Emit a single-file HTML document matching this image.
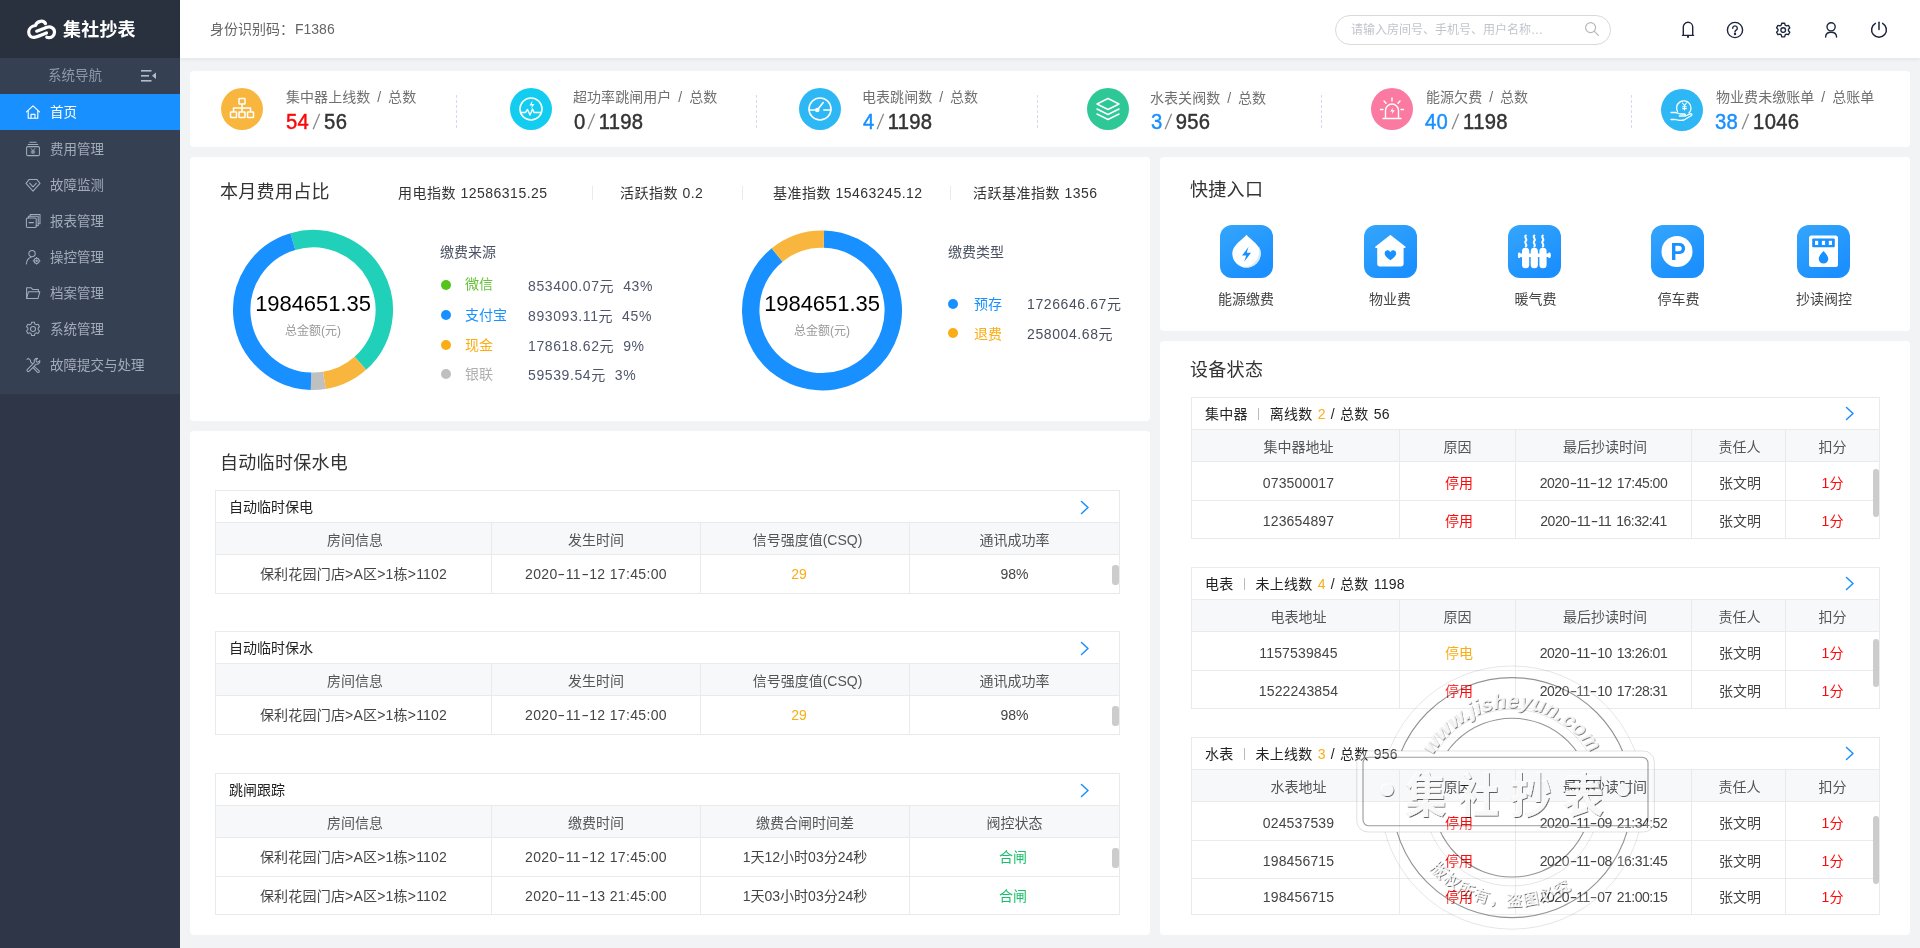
<!DOCTYPE html>
<html lang="zh-CN"><head><meta charset="utf-8"><title>集社抄表</title>
<style>
*{box-sizing:border-box;margin:0;padding:0}
html,body{width:1920px;height:948px;overflow:hidden}
body{position:relative;background:#f2f3f5;font-family:"Liberation Sans","Noto Sans CJK SC",sans-serif;font-size:14px;color:#333}
.abs{position:absolute}
.t{position:absolute;white-space:nowrap;line-height:1}
svg{display:block;overflow:visible}
/* sidebar */
#side{position:absolute;left:0;top:0;width:180px;height:948px;background:#2e3647}
#side .logo{position:absolute;left:0;top:0;width:180px;height:58px;background:#29313f}
#side .menu{position:absolute;left:0;top:58px;width:180px;height:336px;background:#354053}
#side .nav{position:absolute;left:0;top:0;width:180px;height:36px}
#side .item{position:absolute;left:0;width:180px;height:36px;color:#a3abb9;font-size:13.5px}
#side .item.on{background:#1890ff;color:#fff}
#side .item span{position:absolute;left:50px;top:0;line-height:37px}
#side .item svg{position:absolute;left:25px;top:10px}
/* topbar */
#top{position:absolute;left:180px;top:0;width:1740px;height:58px;background:#fff;box-shadow:0 1px 4px rgba(0,21,41,.08)}
.card{position:absolute;background:#fff;border-radius:4px}
/* tables */
.box{position:absolute;border:1px solid #e8eaec;background:#fff;overflow:hidden}
.box .hd{position:absolute;left:0;top:0;right:0;height:32px;border-bottom:1px solid #e8eaec;line-height:33px;padding-left:13px;font-size:14px;color:#222}
.box .hd .or{color:#faad14}
.box .hd .sep{display:inline-block;width:1px;height:12px;background:#bbb;margin:0 11px 0 10px;vertical-align:-1px}
.box .arr{position:absolute;top:9px}
.row{position:absolute;left:0;right:0;display:flex}
.row>div{border-right:1px solid #e8eaec;text-align:center;white-space:nowrap;overflow:hidden}
.row>div:last-child{border-right:0}
.row.th{background:#f7f8fa;color:#555;height:32px;line-height:34.5px;border-bottom:1px solid #e8eaec}
.row.td{color:#444;border-bottom:1px solid #e8eaec}
.num{letter-spacing:.35px}
.rm{letter-spacing:.2px}
.red{color:#fb0a0a}.org{color:#faad14}.grn{color:#19be6b}.blu{color:#1890ff}
.thumb{position:absolute;width:6px;border-radius:3px;background:#ccc}
.ic{width:42px;height:42px;border-radius:50%}
.sl{font-size:14px;color:#707070;letter-spacing:.05px;word-spacing:3px}
.sn{font-size:22px;color:#333;letter-spacing:.35px;transform:scaleX(.92);transform-origin:0 50%;-webkit-text-stroke:.45px currentColor}
.sn i{font-style:normal;font-weight:normal;color:#888;-webkit-text-stroke:0;font-size:21px;margin:0 5px 0 5px;display:inline-block;transform:skewX(-12deg) scaleX(.9)}
.dv{top:95px;width:0;height:33px;border-left:1px dashed #d6d9ef}
.ttl{font-size:18px;color:#333;letter-spacing:.3px}
.ix{font-size:14px;color:#333;letter-spacing:.5px}
.vs{width:1px;height:14px;background:#ebebeb}
.big{font-size:22px;color:#000;text-align:center;letter-spacing:-.05px}
.sm{font-size:12px;color:#999;text-align:center}
.lg{font-size:14px;color:#4a5162}
.lb{font-size:14px}
.lv{font-size:14px;color:#50566a;letter-spacing:.6px}
.dot{width:10px;height:10px;border-radius:50%}
.c4>div:nth-child(1){width:276px}.c4>div:nth-child(2){width:209px}.c4>div:nth-child(3){width:209px}.c4>div:nth-child(4){flex:1}
.c5>div:nth-child(1){width:208px}.c5>div:nth-child(2){width:116px}.c5>div:nth-child(3){width:176px}.c5>div:nth-child(4){width:94px}.c5>div:nth-child(5){flex:1}
.ql{font-size:14px;color:#444;text-align:center}
.num2{letter-spacing:-.5px;word-spacing:1.5px;padding-left:0}
.num3{letter-spacing:.15px;padding-left:6px}
#app{position:absolute;left:0;top:0;width:1920px;height:948px;will-change:transform}
.hy{display:inline-block;transform:scaleX(1.6);margin:0 1.6px}
.sn i.n{margin-left:3px}

</style></head><body><div id="app">
<div id="side">
  <div class="logo">
    <svg class="abs" style="left:24px;top:14px" width="36" height="30" viewBox="0 0 36 30" fill="none" stroke="#fff" stroke-width="3.2" stroke-linecap="round" stroke-linejoin="round">
      <path d="M21.5 9.6C20.5 7.8 18.5 7 16.5 7.3 13.5 7.7 12 9.5 11.5 11.5 8 12 4.7 14.5 4.7 18c0 3.5 2.3 5.6 5.3 5.4 2-.1 3-.6 12.5-4.4"/>
      <path d="M12.7 17.2L23 13.3c4-1.3 7.5 1.2 7.5 4.7 0 3.5-2.5 5.8-5.5 5.6-1-.1-1.6-.2-2.2-.4"/>
    </svg>
    <div class="t" style="left:63px;top:21px;font-size:18px;font-weight:700;color:#fff;letter-spacing:.2px">集社抄表</div>
  </div>
  <div class="menu">
    <div class="nav">
      <div class="t" style="left:48px;top:11px;font-size:13.5px;color:#8f98a8">系统导航</div>
      <svg class="abs" style="left:141px;top:12px" width="16" height="12" viewBox="0 0 16 12" fill="#b5bcc9"><rect x="0" y="0" width="10.5" height="1.6"/><rect x="0" y="5" width="8" height="1.6"/><rect x="0" y="10" width="10.5" height="1.6"/><path d="M15 2.6v6.4L11 5.8z"/></svg>
    </div>
    <div class="item on" style="top:36px"><svg width="16" height="16" viewBox="0 0 16 16" fill="none" stroke="#fff" stroke-width="1.15" stroke-linejoin="round" stroke-linecap="round"><path d="M1.5 7.8L8 1.8l6.5 6"/><path d="M3.2 7v7.2h9.6V7"/><path d="M6 14v-3.6h4V14"/></svg><span>首页</span></div>
    <div class="item" style="top:73px"><svg width="16" height="16" viewBox="0 0 16 16" fill="none" stroke="#a3abb9" stroke-width="1.05" stroke-linejoin="round" stroke-linecap="round"><rect x="1.6" y="5.6" width="12.8" height="9" rx="1.2"/><path d="M3.2 3.4h9.6M4.8 1.3h6.4"/><path d="M6.2 7.6L8 9.8l1.8-2.2M8 9.8v3M6.2 10.2h3.6M6.2 11.8h3.6" stroke-width=".9"/></svg><span>费用管理</span></div>
    <div class="item" style="top:109px"><svg width="16" height="16" viewBox="0 0 16 16" fill="none" stroke="#a3abb9" stroke-width="1.05" stroke-linejoin="round" stroke-linecap="round"><path d="M4.2 2.4h7.6L15 6.4 8 14.2 1 6.4z"/><path d="M4.6 6.2L8 9.8l3.4-3.6"/></svg><span>故障监测</span></div>
    <div class="item" style="top:145px"><svg width="16" height="16" viewBox="0 0 16 16" fill="none" stroke="#a3abb9" stroke-width="1.05" stroke-linejoin="round" stroke-linecap="round"><rect x="1.4" y="5" width="9.8" height="9.4" rx="1"/><path d="M3.4 5V3.2h9.8v9.4h-2"/><path d="M5.2 3.2V1.4H15v9.4h-1.8"/><path d="M4 9.6h4.4"/></svg><span>报表管理</span></div>
    <div class="item" style="top:181px"><svg width="16" height="16" viewBox="0 0 16 16" fill="none" stroke="#a3abb9" stroke-width="1.05" stroke-linejoin="round" stroke-linecap="round"><circle cx="7" cy="4.6" r="3.2"/><path d="M1.4 15c.2-3.6 2-6 4.6-6.8"/><circle cx="11.6" cy="11.8" r="2.6"/><circle cx="11.6" cy="11.8" r=".7"/><path d="M11.6 8.4v.8M11.6 14.4v.8M8.2 11.8h.8M14.2 11.8h.8" stroke-width="1"/></svg><span>操控管理</span></div>
    <div class="item" style="top:217px"><svg width="16" height="16" viewBox="0 0 16 16" fill="none" stroke="#a3abb9" stroke-width="1.05" stroke-linejoin="round" stroke-linecap="round"><path d="M1.6 13.4V2.8h4.6L7.6 4.4h5.8v2.4"/><path d="M1.6 13.4L3.4 6.8h11.4L13 13.4z"/></svg><span>档案管理</span></div>
    <div class="item" style="top:253px"><svg width="16" height="16" viewBox="0 0 16 16" fill="none" stroke="#a3abb9" stroke-width="1.05" stroke-linejoin="round" stroke-linecap="round"><path d="M6.6 1.2h2.8l.5 1.9 1.3.75 1.9-.55 1.4 2.4-1.4 1.4v1.5l1.4 1.4-1.4 2.4-1.9-.55-1.3.75-.5 1.9H6.6l-.5-1.9-1.3-.75-1.9.55-1.4-2.4 1.4-1.4V7.1L1.5 5.7l1.4-2.4 1.9.55 1.3-.75z"/><circle cx="8" cy="7.9" r="2.5"/></svg><span>系统管理</span></div>
    <div class="item" style="top:289px"><svg width="16" height="16" viewBox="0 0 16 16" fill="none" stroke="#a3abb9" stroke-width="1.05" stroke-linejoin="round" stroke-linecap="round"><path d="M10 2.2a3 3 0 0 0-.6 3.2L2.2 12.6a1.3 1.3 0 0 0 1.8 1.8L11.2 7.2a3 3 0 0 0 3.6-3.6l-1.8 1.6-1.6-.4-.4-1.6 1.6-1.8a3 3 0 0 0-2.6.8z"/><path d="M2 2.4l1.2-1 2.2 1.8.2 1.6L7.4 6.6M9.4 9.6l4.8 4.2a1.2 1.2 0 0 1-1.6 1.6L8.2 10.8"/></svg><span>故障提交与处理</span></div>
  </div>
</div>

<div id="top">
  <div class="t" style="left:30px;top:22px;font-size:14px;color:#666">身份识别码：<span style="margin-left:1px">F1386</span></div>
  <div class="abs" style="left:1155px;top:15px;width:276px;height:30px;border:1px solid #d9d9d9;border-radius:16px;background:#fff"></div>
  <div class="t" style="left:1171px;top:24px;font-size:12px;color:#c0c4cc">请输入房间号、手机号、用户名称…</div>
  <svg class="abs" style="left:1404px;top:21px" width="16" height="16" viewBox="0 0 16 16" fill="none" stroke="#b8b8b8" stroke-width="1.2" stroke-linecap="round"><circle cx="6.6" cy="6.6" r="5"/><path d="M10.4 10.4l4 4"/></svg>
  <!-- bell -->
  <svg class="abs" style="left:1499px;top:20px" width="18" height="20" viewBox="0 0 18 20" fill="none" stroke="#1b2540" stroke-width="1.4" stroke-linecap="round" stroke-linejoin="round"><path d="M4.3 15.2V7a4.7 4.7 0 0 1 9.4 0v8.2"/><path d="M3.5 15.4h11"/><path d="M9 16.4v.7" stroke-width="2"/></svg>
  <!-- question -->
  <svg class="abs" style="left:1546px;top:21px" width="18" height="18" viewBox="0 0 18 18" fill="none" stroke="#1b2540" stroke-width="1.4" stroke-linecap="round" stroke-linejoin="round"><circle cx="9" cy="9" r="7.6"/><path d="M6.7 7.2a2.3 2.3 0 1 1 3.5 2c-.8.5-1.2.9-1.2 1.8"/><circle cx="9" cy="13" r=".5" fill="#1b2540"/></svg>
  <!-- gear -->
  <svg class="abs" style="left:1594.7px;top:22.1px" width="16.4" height="16.4" viewBox="0 0 16 16" fill="none" stroke="#1b2540" stroke-width="1.3" stroke-linecap="round" stroke-linejoin="round"><path d="M6.6 1.2h2.8l.5 1.9 1.3.75 1.9-.55 1.4 2.4-1.4 1.4v1.5l1.4 1.4-1.4 2.4-1.9-.55-1.3.75-.5 1.9H6.6l-.5-1.9-1.3-.75-1.9.55-1.4-2.4 1.4-1.4V7.1L1.5 5.7l1.4-2.4 1.9.55 1.3-.75z"/><circle cx="8" cy="7.9" r="2.3"/></svg>
  <!-- user -->
  <svg class="abs" style="left:1642px;top:21px" width="18" height="18" viewBox="0 0 18 18" fill="none" stroke="#1b2540" stroke-width="1.4" stroke-linecap="round" stroke-linejoin="round"><circle cx="9.1" cy="5.8" r="4.1"/><path d="M3.6 16C3.8 12.8 6 11.2 9.1 11.2S14.4 12.8 14.6 16"/></svg>
  <!-- power -->
  <svg class="abs" style="left:1690px;top:20px" width="18" height="19" viewBox="0 0 18 19" fill="none" stroke="#1b2540" stroke-width="1.5" stroke-linecap="round" stroke-linejoin="round"><path d="M5.4 3.4a7.4 7.4 0 1 0 7.2 0"/><path d="M9 2.2v7.4"/></svg>
</div>

<div class="card" id="stats" style="left:190px;top:71px;width:1720px;height:76px"></div>
<!-- stat 1 -->
<div class="abs ic" style="left:221px;top:88px;background:#f9b63f"><svg width="42" height="42" viewBox="0 0 42 42" fill="none" stroke="#fff" stroke-width="1.5" stroke-linejoin="round"><rect x="18" y="10.5" width="6" height="5.5" rx=".6"/><rect x="9.5" y="24" width="6" height="5.5" rx=".6"/><rect x="18" y="24" width="6" height="5.5" rx=".6"/><rect x="26.5" y="24" width="6" height="5.5" rx=".6"/><path d="M21 16v8M12.5 24v-4h17v4"/></svg></div>
<div class="t sl" style="left:286px;top:90px">集中器上线数 / 总数</div>
<div class="t sn" style="left:286px;top:111px"><span style="color:#fa0808">54</span><i>/</i>56</div>
<div class="abs dv" style="left:456px"></div>
<!-- stat 2 -->
<div class="abs ic" style="left:510px;top:88px;background:#13cdf0"><svg width="42" height="42" viewBox="0 0 42 42" fill="none" stroke="#fff" stroke-width="1.6" stroke-linejoin="round" stroke-linecap="round"><circle cx="21" cy="21" r="11"/><path d="M10.5 24.5h5l2-3 2.5 5.5 2.5-6 1.5 3.5h7" stroke-width="1.4"/><path d="M22.5 12.5l-3 5h2.6l-1.2 3.5 3.6-5h-2.6z" fill="#fff" stroke="none"/></svg></div>
<div class="t sl" style="left:573px;top:90px">超功率跳闸用户 / 总数</div>
<div class="t sn" style="left:574px;top:111px"><span>0</span><i class="n">/</i>1198</div>
<div class="abs dv" style="left:756px"></div>
<!-- stat 3 -->
<div class="abs ic" style="left:799px;top:88px;background:#2db7f5"><svg width="42" height="42" viewBox="0 0 42 42" fill="none" stroke="#fff" stroke-width="1.6" stroke-linejoin="round" stroke-linecap="round"><circle cx="21" cy="21" r="11"/><circle cx="18.3" cy="22" r="1.5" fill="#fff"/><path d="M10.2 22h6.4M19.3 20.8l4.9-6.2M24.8 22h7"/></svg></div>
<div class="t sl" style="left:862px;top:90px">电表跳闸数 / 总数</div>
<div class="t sn" style="left:863px;top:111px"><span class="blu">4</span><i class="n">/</i>1198</div>
<div class="abs dv" style="left:1037px"></div>
<!-- stat 4 -->
<div class="abs ic" style="left:1087px;top:88px;background:#2dc895"><svg width="42" height="42" viewBox="0 0 42 42" fill="none" stroke="#fff" stroke-width="1.5" stroke-linejoin="round" stroke-linecap="round"><path d="M21 10.5l11 5.5-11 5.5-11-5.5z"/><path d="M10 21l11 5.5 11-5.5"/><path d="M10 26l11 5.5 11-5.5"/></svg></div>
<div class="t sl" style="left:1150px;top:91px">水表关阀数 / 总数</div>
<div class="t sn" style="left:1151px;top:111px"><span class="blu">3</span><i class="n">/</i>956</div>
<div class="abs dv" style="left:1321px"></div>
<!-- stat 5 -->
<div class="abs ic" style="left:1371px;top:88px;background:#fa7aa2"><svg width="42" height="42" viewBox="0 0 42 42" fill="none" stroke="#fff" stroke-width="1.4" stroke-linejoin="round" stroke-linecap="round"><path d="M14.5 30v-7.5a6.5 6.5 0 0 1 13 0V30"/><path d="M12 30.5h18"/><path d="M21 10v3M13 13l2 2.2M29 13l-2 2.2M9.5 21.5h2.5M30 21.5h2.5"/><path d="M22 19.5l-2.8 4h2.4l-1 3 3.2-4.2h-2.4z" fill="#fff" stroke="none"/></svg></div>
<div class="t sl" style="left:1426px;top:90px">能源欠费 / 总数</div>
<div class="t sn" style="left:1425px;top:111px"><span class="blu">40</span><i>/</i>1198</div>
<div class="abs dv" style="left:1631px"></div>
<!-- stat 6 -->
<div class="abs ic" style="left:1661px;top:89px;background:#2db7f5"><svg width="42" height="42" viewBox="0 0 42 42" fill="none" stroke="#fff" stroke-width="1.3" stroke-linejoin="round" stroke-linecap="round"><path d="M16.5 22.5a7.2 7.2 0 1 1 11.5 1.5"/><path d="M21.5 14l2 2.6 2-2.6M23.5 16.6v4.4M21.6 17.8h3.8M21.6 19.6h3.8" stroke-width="1.1"/><path d="M10 23.5h4.5c2 0 3 1.5 5 1.5h4c1.2 0 1.2 2-.2 2h-5"/><path d="M10 30.5h4.5c3 1 6 1 8.5.5l7.5-4.5c1-.8 0-2.2-1.2-1.6l-4.8 2.1"/></svg></div>
<div class="t sl" style="left:1716px;top:90px">物业费未缴账单 / 总账单</div>
<div class="t sn" style="left:1715px;top:111px"><span class="blu">38</span><i>/</i>1046</div>

<div class="card" style="left:190px;top:157px;width:960px;height:264px"></div>
<div class="t ttl" style="left:220px;top:183px">本月费用占比</div>
<div class="t ix" style="left:398px;top:186px">用电指数 12586315.25</div>
<div class="abs vs" style="left:592px;top:186px"></div>
<div class="t ix" style="left:620px;top:186px">活跃指数 0.2</div>
<div class="abs vs" style="left:742px;top:186px"></div>
<div class="t ix" style="left:773px;top:186px">基准指数 15463245.12</div>
<div class="abs vs" style="left:950px;top:186px"></div>
<div class="t ix" style="left:973px;top:186px">活跃基准指数 1356</div>
<svg class="abs" style="left:0;top:0" width="1160" height="430"><path d="M292.87 241.60A71.3 71.3 0 0 1 360.34 363.32" fill="none" stroke="#20d0b8" stroke-width="17.4"/><path d="M360.34 363.32A71.3 71.3 0 0 1 324.40 380.38" fill="none" stroke="#f9b63f" stroke-width="17.4"/><path d="M324.40 380.38A71.3 71.3 0 0 1 311.01 381.27" fill="none" stroke="#c0c0c0" stroke-width="17.4"/><path d="M311.01 381.27A71.3 71.3 0 0 1 292.87 241.60" fill="none" stroke="#1890ff" stroke-width="17.4"/><path d="M823.87 239.12A71.3 71.3 0 1 1 777.13 254.99" fill="none" stroke="#1890ff" stroke-width="17.4"/><path d="M777.13 254.99A71.3 71.3 0 0 1 823.87 239.12" fill="none" stroke="#f9b63f" stroke-width="17.4"/></svg>
<div class="t big" style="left:233px;width:160px;top:293px">1984651.35</div>
<div class="t sm" style="left:233px;width:160px;top:325px">总金额(元)</div>
<div class="t big" style="left:742px;width:160px;top:293px">1984651.35</div>
<div class="t sm" style="left:742px;width:160px;top:325px">总金额(元)</div>

<div class="t lg" style="left:440px;top:245px">缴费来源</div>
<div class="abs dot" style="left:441px;top:280px;background:#52c41a"></div><div class="t lb" style="left:465px;top:277px;color:#67c23a">微信</div><div class="t lv" style="left:528px;top:279px">853400.07元&nbsp; 43%</div>
<div class="abs dot" style="left:441px;top:310px;background:#1890ff"></div><div class="t lb" style="left:465px;top:308px;color:#1890ff">支付宝</div><div class="t lv" style="left:528px;top:309px">893093.11元&nbsp; 45%</div>
<div class="abs dot" style="left:441px;top:340px;background:#faad14"></div><div class="t lb" style="left:465px;top:338px;color:#faad14">现金</div><div class="t lv" style="left:528px;top:339px">178618.62元&nbsp; 9%</div>
<div class="abs dot" style="left:441px;top:369px;background:#bfbfbf"></div><div class="t lb" style="left:465px;top:367px;color:#b0b0b0">银联</div><div class="t lv" style="left:528px;top:368px">59539.54元&nbsp; 3%</div>

<div class="t lg" style="left:948px;top:245px">缴费类型</div>
<div class="abs dot" style="left:948px;top:299px;background:#1890ff"></div><div class="t lb" style="left:974px;top:297px;color:#1890ff">预存</div><div class="t lv" style="left:1027px;top:297px;color:#484e5c">1726646.67元</div>
<div class="abs dot" style="left:948px;top:328px;background:#faad14"></div><div class="t lb" style="left:974px;top:327px;color:#faad14">退费</div><div class="t lv" style="left:1027px;top:327px;color:#484e5c">258004.68元</div>

<div class="card" style="left:190px;top:431px;width:960px;height:504px"></div>
<div class="t ttl" style="left:220px;top:454px">自动临时保水电</div>

<div class="box" style="left:215px;top:490px;width:905px;height:104px">
  <div class="hd">自动临时保电</div>
  <svg class="arr" style="left:864px" width="10" height="15" viewBox="0 0 10 15" fill="none" stroke="#1890ff" stroke-width="1.5" stroke-linecap="round" stroke-linejoin="round"><path d="M1.5 1.5L8 7.5 1.5 13.5"/></svg>
  <div class="row th c4" style="top:32px"><div style="padding-left:3px">房间信息</div><div>发生时间</div><div style="padding-left:5px">信号强度值(CSQ)</div><div>通讯成功率</div></div>
  <div class="row td c4" style="top:64px;height:39px;line-height:38px"><div class="rm">保利花园门店&gt;A区&gt;1栋&gt;1102</div><div class="num">2020<span class="hy">-</span>11<span class="hy">-</span>12 17:45:00</div><div class="org" style="padding-right:12px">29</div><div>98%</div></div>
  <div class="thumb" style="left:896px;top:74px;height:20px;width:7px"></div>
</div>

<div class="box" style="left:215px;top:631px;width:905px;height:104px">
  <div class="hd">自动临时保水</div>
  <svg class="arr" style="left:864px" width="10" height="15" viewBox="0 0 10 15" fill="none" stroke="#1890ff" stroke-width="1.5" stroke-linecap="round" stroke-linejoin="round"><path d="M1.5 1.5L8 7.5 1.5 13.5"/></svg>
  <div class="row th c4" style="top:32px"><div style="padding-left:3px">房间信息</div><div>发生时间</div><div style="padding-left:5px">信号强度值(CSQ)</div><div>通讯成功率</div></div>
  <div class="row td c4" style="top:64px;height:39px;line-height:38px"><div class="rm">保利花园门店&gt;A区&gt;1栋&gt;1102</div><div class="num">2020<span class="hy">-</span>11<span class="hy">-</span>12 17:45:00</div><div class="org" style="padding-right:12px">29</div><div>98%</div></div>
  <div class="thumb" style="left:896px;top:74px;height:20px;width:7px"></div>
</div>

<div class="box" style="left:215px;top:773px;width:905px;height:142px">
  <div class="hd">跳闸跟踪</div>
  <svg class="arr" style="left:864px" width="10" height="15" viewBox="0 0 10 15" fill="none" stroke="#1890ff" stroke-width="1.5" stroke-linecap="round" stroke-linejoin="round"><path d="M1.5 1.5L8 7.5 1.5 13.5"/></svg>
  <div class="row th c4" style="top:32px"><div style="padding-left:3px">房间信息</div><div>缴费时间</div><div>缴费合闸时间差</div><div>阀控状态</div></div>
  <div class="row td c4" style="top:64px;height:39px;line-height:38px"><div class="rm">保利花园门店&gt;A区&gt;1栋&gt;1102</div><div class="num">2020<span class="hy">-</span>11<span class="hy">-</span>12 17:45:00</div><div>1天12小时03分24秒</div><div class="grn" style="padding-right:3px">合闸</div></div>
  <div class="row td c4" style="top:103px;height:38px;line-height:38px;border-bottom:0"><div class="rm">保利花园门店&gt;A区&gt;1栋&gt;1102</div><div class="num">2020<span class="hy">-</span>11<span class="hy">-</span>13 21:45:00</div><div>1天03小时03分24秒</div><div class="grn" style="padding-right:3px">合闸</div></div>
  <div class="thumb" style="left:896px;top:74px;height:20px;width:7px"></div>
</div>

<div class="card" style="left:1160px;top:157px;width:750px;height:174px"></div>
<div class="t ttl" style="left:1190px;top:181px">快捷入口</div>
<!-- 1 energy -->
<svg class="abs" style="left:1220px;top:225px" width="53" height="54" viewBox="0 0 53 54"><defs><linearGradient id="g1" x1="0" y1="0" x2=".6" y2="1"><stop offset="0" stop-color="#35a6fc"/><stop offset="1" stop-color="#1a8ffe"/></linearGradient></defs><rect width="53" height="53" rx="12" fill="url(#g1)"/><g transform="translate(.5 1)"><path d="M26 8.8C30 13.8 40.2 19.2 40.2 27.4A14.2 14.2 0 0 1 11.8 27.4C11.8 19.2 22 13.8 26 8.8z" fill="#fff"/><path d="M38.6 20.5c1 2 1.6 4.2 1.6 6.9A14.2 14.2 0 0 1 20 40.2c10 3.3 20.5-6 18.6-19.7z" fill="#d6ebff"/><path d="M28 21l-6.5 8.5h4.2l-2 6.2 6.8-9h-4.3z" fill="#1890ff"/></g></svg>
<div class="t ql" style="left:1218px;top:292px">能源缴费</div>
<!-- 2 property -->
<svg class="abs" style="left:1364px;top:225px" width="53" height="54" viewBox="0 0 53 54"><rect width="53" height="53" rx="12" fill="url(#g1)"/><path d="M26.4 10.9L12 22.2h2v16.8a1.8 1.8 0 0 0 1.8 1.8h21.2a1.8 1.8 0 0 0 1.8-1.8V22.2h2z" fill="#fff" stroke="#fff" stroke-width="1.6" stroke-linejoin="round"/><path d="M26.4 35.2c-3.5-2.5-5.8-4.5-5.8-7a3 3 0 0 1 5.8-1 3 3 0 0 1 5.8 1c0 2.5-2.3 4.5-5.8 7z" fill="#1890ff"/></svg>
<div class="t ql" style="left:1341px;top:292px;width:98px">物业费</div>
<!-- 3 heating -->
<svg class="abs" style="left:1508px;top:225px" width="53" height="54" viewBox="0 0 53 54"><rect width="53" height="53" rx="12" fill="url(#g1)"/><g fill="#fff"><rect x="14" y="22.8" width="7.2" height="20.5" rx="3.6"/><rect x="22.7" y="22.8" width="7.2" height="20.5" rx="3.6"/><rect x="31.4" y="22.8" width="7.2" height="20.5" rx="3.6"/><rect x="10" y="28.6" width="32.6" height="3.4" rx="1.7"/><rect x="10" y="27.6" width="2.4" height="5.4" rx="1"/><rect x="40.2" y="27.6" width="2.4" height="5.4" rx="1"/></g><g fill="none" stroke="#fff" stroke-width="2" stroke-linecap="round"><path d="M17.8 10.5c-2.2 1.8 2.2 3.7 0 5.5s2.2 3.7 0 5.5"/><path d="M26.3 10.5c-2.2 1.8 2.2 3.7 0 5.5s2.2 3.7 0 5.5"/><path d="M34.8 10.5c-2.2 1.8 2.2 3.7 0 5.5s2.2 3.7 0 5.5"/></g></svg>
<div class="t ql" style="left:1486.5px;top:292px;width:98px">暖气费</div>
<!-- 4 parking -->
<svg class="abs" style="left:1651px;top:225px" width="53" height="54" viewBox="0 0 53 54"><rect width="53" height="53" rx="12" fill="url(#g1)"/><circle cx="26" cy="26.5" r="15.5" fill="#fff"/><text x="27.2" y="35.2" text-anchor="middle" font-family="Liberation Sans, sans-serif" font-weight="bold" font-size="23" fill="#1890ff">P</text></svg>
<div class="t ql" style="left:1629.5px;top:292px;width:98px">停车费</div>
<!-- 5 meter -->
<svg class="abs" style="left:1797px;top:225px" width="53" height="54" viewBox="0 0 53 54"><rect width="53" height="53" rx="12" fill="url(#g1)"/><rect x="12" y="10.4" width="29" height="31.7" rx="2.5" fill="#fff"/><rect x="15.2" y="13.6" width="22.6" height="8.6" rx="1" fill="#1890ff"/><rect x="18" y="15.8" width="3.2" height="4.2" fill="#fff"/><rect x="24.9" y="15.8" width="3.2" height="4.2" fill="#fff"/><rect x="31.8" y="15.8" width="3.2" height="4.2" fill="#fff"/><path d="M26.5 26c2.5 3 4.8 5.2 4.8 7.8a4.8 4.8 0 0 1-9.6 0c0-2.6 2.3-4.8 4.8-7.8z" fill="#1890ff"/></svg>
<div class="t ql" style="left:1796px;top:292px">抄读阀控</div>

<div class="card" style="left:1160px;top:341px;width:750px;height:594px"></div>
<div class="t ttl" style="left:1190px;top:361px">设备状态</div>

<div class="box" style="left:1191px;top:397px;width:689px;height:142px">
  <div class="hd" style="word-spacing:1px;letter-spacing:.25px">集中器<span class="sep"></span>离线数 <span class="or">2</span> / 总数 56</div>
  <svg class="arr" style="left:653px;top:8px" width="10" height="15" viewBox="0 0 10 15" fill="none" stroke="#1890ff" stroke-width="1.5" stroke-linecap="round" stroke-linejoin="round"><path d="M1.5 1.5L8 7.5 1.5 13.5"/></svg>
  <div class="row th c5" style="top:32px"><div style="padding-left:6px">集中器地址</div><div>原因</div><div style="padding-left:3px">最后抄读时间</div><div style="padding-left:2px">责任人</div><div>扣分</div></div>
  <div class="row td c5" style="top:64px;height:39px;line-height:42px"><div class="num3">073500017</div><div class="red" style="padding-left:3px">停用</div><div class="num2">2020<span class="hy">-</span>11<span class="hy">-</span>12 17:45:00</div><div style="padding-left:3px">张文明</div><div class="red">1分</div></div>
  <div class="row td c5" style="top:103px;height:38px;line-height:40px;border-bottom:0"><div class="num3">123654897</div><div class="red" style="padding-left:3px">停用</div><div class="num2">2020<span class="hy">-</span>11<span class="hy">-</span>11 16:32:41</div><div style="padding-left:3px">张文明</div><div class="red">1分</div></div>
  <div class="thumb" style="left:681px;top:71px;height:48px"></div>
</div>

<div class="box" style="left:1191px;top:567px;width:689px;height:142px">
  <div class="hd" style="word-spacing:1px;letter-spacing:.25px">电表<span class="sep"></span>未上线数 <span class="or">4</span> / 总数 1198</div>
  <svg class="arr" style="left:653px;top:8px" width="10" height="15" viewBox="0 0 10 15" fill="none" stroke="#1890ff" stroke-width="1.5" stroke-linecap="round" stroke-linejoin="round"><path d="M1.5 1.5L8 7.5 1.5 13.5"/></svg>
  <div class="row th c5" style="top:32px"><div style="padding-left:6px">电表地址</div><div>原因</div><div style="padding-left:3px">最后抄读时间</div><div style="padding-left:2px">责任人</div><div>扣分</div></div>
  <div class="row td c5" style="top:64px;height:39px;line-height:42px"><div class="num3">1157539845</div><div class="org" style="padding-left:3px">停电</div><div class="num2">2020<span class="hy">-</span>11<span class="hy">-</span>10 13:26:01</div><div style="padding-left:3px">张文明</div><div class="red">1分</div></div>
  <div class="row td c5" style="top:103px;height:38px;line-height:40px;border-bottom:0"><div class="num3">1522243854</div><div class="red" style="padding-left:3px">停用</div><div class="num2">2020<span class="hy">-</span>11<span class="hy">-</span>10 17:28:31</div><div style="padding-left:3px">张文明</div><div class="red">1分</div></div>
  <div class="thumb" style="left:681px;top:71px;height:48px"></div>
</div>

<div class="box" style="left:1191px;top:737px;width:689px;height:178px">
  <div class="hd" style="word-spacing:1px;letter-spacing:.25px">水表<span class="sep"></span>未上线数 <span class="or">3</span> / 总数 956</div>
  <svg class="arr" style="left:653px;top:8px" width="10" height="15" viewBox="0 0 10 15" fill="none" stroke="#1890ff" stroke-width="1.5" stroke-linecap="round" stroke-linejoin="round"><path d="M1.5 1.5L8 7.5 1.5 13.5"/></svg>
  <div class="row th c5" style="top:32px"><div style="padding-left:6px">水表地址</div><div>原因</div><div style="padding-left:3px">最后抄读时间</div><div style="padding-left:2px">责任人</div><div>扣分</div></div>
  <div class="row td c5" style="top:64px;height:39px;line-height:42px"><div class="num3">024537539</div><div class="red" style="padding-left:3px">停用</div><div class="num2">2020<span class="hy">-</span>11<span class="hy">-</span>09 21:34:52</div><div style="padding-left:3px">张文明</div><div class="red">1分</div></div>
  <div class="row td c5" style="top:103px;height:38px;line-height:40px"><div class="num3">198456715</div><div class="red" style="padding-left:3px">停用</div><div class="num2">2020<span class="hy">-</span>11<span class="hy">-</span>08 16:31:45</div><div style="padding-left:3px">张文明</div><div class="red">1分</div></div>
  <div class="row td c5" style="top:141px;height:38px;line-height:36px;border-bottom:0"><div class="num3">198456715</div><div class="red" style="padding-left:3px">停用</div><div class="num2">2020<span class="hy">-</span>11<span class="hy">-</span>07 21:00:15</div><div style="padding-left:3px">张文明</div><div class="red">1分</div></div>
  <div class="thumb" style="left:681px;top:78px;height:68px"></div>
</div>

<svg class="abs" id="wm" style="left:1350px;top:650px;pointer-events:none" width="330" height="290" viewBox="0 0 330 290">
  <defs>
    <path id="arcT" d="M77.43 116.82A90 90 0 0 1 246.57 116.82"/>
    <path id="arcB" d="M60.04 184.71A108.5 108.5 0 0 0 263.96 184.71"/>
    <clipPath id="wmc"><path clip-rule="evenodd" d="M-10-10H340V300H-10zM6.8 101H304.3V182H6.8z"/></clipPath>
    <filter id="sh" x="-10%" y="-10%" width="120%" height="120%"><feDropShadow dx="0.8" dy="1" stdDeviation="0.5" flood-color="#000" flood-opacity=".7"/></filter>
  </defs>
  <g clip-path="url(#wmc)" fill="none">
    <circle cx="162.0" cy="147.6" r="125.8" stroke="#fff" stroke-opacity=".18" stroke-width="11.6"/>
    <circle cx="162.0" cy="147.6" r="120" stroke="#000" stroke-opacity=".42" stroke-width="1.1"/>
    <circle cx="162.0" cy="147.6" r="131.6" stroke="#000" stroke-opacity=".1" stroke-width="1"/>
    <circle cx="162.0" cy="147.6" r="83.85" stroke="#fff" stroke-opacity=".18" stroke-width="8.9"/>
    <circle cx="162.0" cy="147.6" r="79.4" stroke="#000" stroke-opacity=".42" stroke-width="1.1"/>
    <circle cx="162.0" cy="147.6" r="88.3" stroke="#000" stroke-opacity=".1" stroke-width="1"/>
  </g>
  <g fill="none">
    <rect x="9.9" y="104.1" width="291.3" height="74.8" rx="9" stroke="#fff" stroke-opacity=".3" stroke-width="6.2"/>
    <rect x="13" y="107.2" width="285" height="68.6" rx="6" stroke="#000" stroke-opacity=".4" stroke-width="1.1"/>
    <rect x="6.8" y="101" width="297.5" height="81" rx="11" stroke="#000" stroke-opacity=".12" stroke-width="1"/>
  </g>
  <g filter="url(#sh)" fill="#fff">
    <text font-family="Liberation Sans, sans-serif" font-size="21" font-weight="bold" font-style="italic" fill-opacity=".8" letter-spacing=".2"><textPath href="#arcT" startOffset="49.5%" text-anchor="middle">www.jisheyun.com</textPath></text>
    <text font-family="Liberation Sans, Noto Sans CJK SC, sans-serif" font-size="16" font-weight="500" fill-opacity=".8" letter-spacing="1.5"><textPath href="#arcB" startOffset="44.5%" text-anchor="middle">版权所有，盗图必究</textPath></text>
    <text transform="translate(160.5 161.5) scale(1 1.15)" x="0" y="0" text-anchor="middle" font-family="Noto Sans CJK SC, sans-serif" font-size="41" font-weight="700" fill-opacity=".9" letter-spacing="11.6">集社抄表</text>
    <text x="37" y="136.5" text-anchor="middle" dominant-baseline="central" font-family="Noto Sans CJK SC, sans-serif" font-size="60" fill-opacity=".9">·</text>
    <text x="273" y="136.5" text-anchor="middle" dominant-baseline="central" font-family="Noto Sans CJK SC, sans-serif" font-size="60" fill-opacity=".9">·</text>
  </g>
</svg>

</div></body></html>
